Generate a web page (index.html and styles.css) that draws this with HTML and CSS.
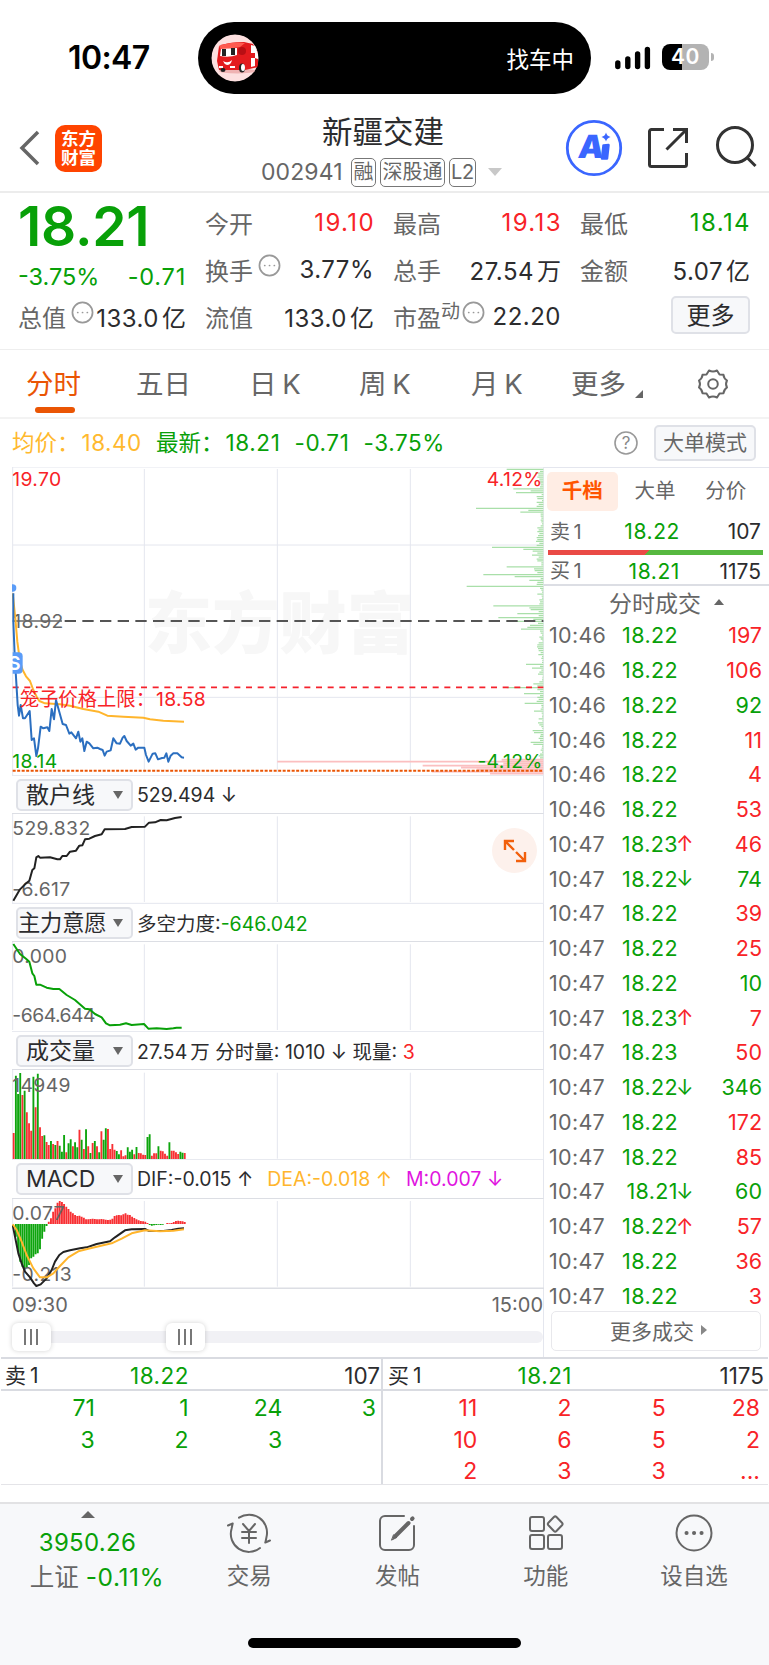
FILE: index.html
```html
<!DOCTYPE html>
<html lang="zh-CN">
  <head>
    <meta charset="UTF-8" />
    <meta name="viewport" content="width=device-width, initial-scale=1.0" />
    <title>新疆交建 002941</title>
    <link rel="stylesheet" href="styles.css">
  </head>
  <body>
    <div class="status-bar">
      <div class="clock">10:47</div>
      <div class="island">
        <svg class="van" viewBox="0 0 48 48">
          <circle cx="24" cy="24" r="23.5" fill="#fde0e0" />
          <ellipse cx="26" cy="37" rx="18" ry="2.5" fill="#efb3b3" />
          <path d="M8 12q9-4 25-4l9 2 5 9v14l-13 3-26 0-2-9z" fill="#e31b1e" />
          <path d="M8 12q12-5 26-3l-5 4-19 3z" fill="#ff5a50" />
          <path d="M40 11l4 1 3 8v5l-3-1v-5h-4zM40 24h4v8l-4 1z" fill="#fff" />
          <path d="M10 15l16-1v7q-8 3-17 1z" fill="#fff" />
          <path d="M11 15h4v7h-4zM20 14h4v7h-4z" fill="#222" />
          <circle cx="31" cy="17" r="4" fill="#b80f14" />
          <path d="M12 27q5 3 9-1-1 5-5 5-3-1-4-4z" fill="#fff" />
          <ellipse cx="12" cy="36" rx="2.5" ry="2" fill="#222" />
          <ellipse cx="31" cy="34" rx="3" ry="4.5" fill="#222" />
          <ellipse cx="32" cy="33.5" rx="2" ry="3.5" fill="#fff" />
          <path d="M8 32h4v2H8zM19 32h5v2h-5z" fill="#fff" />
        </svg>
        <span>找车中</span>
      </div>
      <svg class="signal" viewBox="0 0 36 24">
        <path d="M2.8 17v3.5M12.8 13v7.5M22.6 8v12.5M32.4 3.500v17" stroke="#000" stroke-width="5.400" stroke-linecap="round" />
      </svg>
      <div class="battery">40</div>
    </div>

    <header class="header">
      <svg class="back" viewBox="0 0 22 36"><path d="M19 2L3 18l16 16" /></svg>
      <div class="logo">东方<br>财富</div>
      <div class="stock">
        <h1>新疆交建</h1>
        <div class="stock-code">
          <span class="code">002941</span>
          <i class="badge">融</i><i class="badge">深股通</i><i class="badge l2">L2</i>
          <svg class="caret" viewBox="0 0 14 8"><path d="M0 0h14L7 8z" fill="#c8c8c8" /></svg>
        </div>
      </div>
      <svg class="ai" viewBox="0 0 58 58">
        <circle cx="29" cy="29" r="26.700" fill="#fff" stroke="#3a66ff" stroke-width="2.800" />
        <text x="17" y="39" transform="skewX(-7)">A</text>
        <path d="M38.500 26.500l5-.5-1.500 13.500h-5z" fill="#3a66ff" stroke="#3a66ff" stroke-width="2.500" stroke-linejoin="round" />
        <path d="M41 13.500q.8 3.500 4.500 4.500-3.700 1-4.500 4.500-.8-3.500-4.500-4.500 3.700-1 4.500-4.500z" fill="#3a66ff" />
      </svg>
      <svg class="share" viewBox="0 0 42 42">
        <path d="M17 2.500H4.500a2 2 0 0 0-2 2v33a2 2 0 0 0 2 2h33a2 2 0 0 0 2-2V26M26 2.500h13.500V16M39 3L19.500 22.500" />
      </svg>
      <svg class="search" viewBox="0 0 44 44"><circle cx="20" cy="19" r="17.500" /><path d="M32.500 32l8 8" /></svg>
    </header>

    <section class="quote">
      <div class="quote-price">
        <div class="price">18.21</div>
        <div class="change"><span>-3.75%</span><span>-0.71</span></div>
        <div class="cell total"><label>总值</label><svg class="dots" viewBox="0 0 24 24"><circle cx="12" cy="12" r="10.500" /><path d="M7 12h.1M12 12h.1M17 12h.1" /></svg><b>133.0<em>亿</em></b></div>
      </div>
      <div class="quote-grid">
        <div class="cell"><label>今开</label><b class="up">19.10</b></div>
        <div class="cell"><label>最高</label><b class="up">19.13</b></div>
        <div class="cell"><label>最低</label><b class="down">18.14</b></div>
        <div class="cell"><label>换手</label><svg class="dots" viewBox="0 0 24 24"><circle cx="12" cy="12" r="10.500" /><path d="M7 12h.1M12 12h.1M17 12h.1" /></svg><b>3.77%</b></div>
        <div class="cell"><label>总手</label><b>27.54<em>万</em></b></div>
        <div class="cell"><label>金额</label><b>5.07<em>亿</em></b></div>
        <div class="cell"><label>流值</label><b>133.0<em>亿</em></b></div>
        <div class="cell"><label>市盈<sup>动</sup></label><svg class="dots" viewBox="0 0 24 24"><circle cx="12" cy="12" r="10.500" /><path d="M7 12h.1M12 12h.1M17 12h.1" /></svg><b>22.20</b></div>
        <div class="cell"><button class="more-btn">更多</button></div>
      </div>
    </section>

    <nav class="tabs">
      <span class="tab active">分时</span>
      <span class="tab">五日</span>
      <span class="tab">日 K</span>
      <span class="tab">周 K</span>
      <span class="tab">月 K</span>
      <span class="tab more">更多<svg viewBox="0 0 8 8"><path d="M8 0v8H0z" fill="#666" /></svg></span>
      <svg class="gear" viewBox="0 0 32 32">
        <path d="M12 2.500q4 2 8 0l2.500 4 4 .3q.3 3.500 3.500 5.700-2 3.500 0 7-3.200 2.200-3.500 5.700l-4 .3-2.500 4q-4-2-8 0l-2.500-4-4-.3q-.3-3.500-3.500-5.700 2-3.500 0-7 3.200-2.200 3.500-5.700l4-.3z" />
        <circle cx="16" cy="16" r="4.800" />
      </svg>
    </nav>

    <div class="info">
      <span class="avg">均价：<b>18.40</b></span>
      <span class="latest">最新：<b>18.21</b><b>-0.71</b><b>-3.75%</b></span>
      <svg class="help" viewBox="0 0 24 24"><circle cx="12" cy="12" r="11" /><text x="12" y="18" text-anchor="middle">?</text></svg>
      <button class="mode-btn">大单模式</button>
    </div>

    <main class="board">
      <div class="charts">
        <!-- price / average / depth, 3 units per pixel -->
        <svg class="chart" height="309" viewBox="36 36 1596 927">
          <text class="watermark" x="434" y="578">东方财富</text>
          <path class="grid" d="M433 42V952M832 42V952M1231 42V952M38 270H1630M38 727H1630" />
          <path class="grid" d="M36 36H1632M36 962H1632M38 36V962M1631 36V962" />
          <g id="depth"></g>
          <text class="t up" x="37" y="94">19.70</text>
          <text class="t up" x="1628" y="94" text-anchor="end">4.12%</text>
          <path d="M38 498H186" stroke="#666" stroke-width="4" />
          <path d="M194 498H1630" stroke="#555" stroke-width="5.500" stroke-dasharray="34 19" />
          <text class="t gray" x="40" y="518">18.92</text>
          <path d="M38 697H1630" stroke="#f5222d" stroke-width="5.500" stroke-dasharray="18 17" />
          <circle cx="38" cy="399" r="11" fill="#5a9cf8" />
          <polyline class="line avg-line" points="38,415 46,490 52,560 60,620 68,645 78,664 90,678 100,705 110,725 118,738 135,745 180,748 210,752 250,762 295,770 322,782 370,785 430,788 450,793 490,797 552,800" />
          <polyline class="line price-line" points="40,415 40,500 44,600 50,700 53,750 57,782 62,750 69,790 75,790 89,768 95,855 102,850 109,903 114,880 122,815 130,820 142,817 148,828 155,762 162,793 168,735 188,807 198,810 208,836 214,832 228,850 235,830 241,860 247,850 253,888 260,860 268,865 280,880 292,878 300,882 308,885 314,902 320,890 332,886 340,850 350,865 360,866 368,848 373,843 380,858 392,872 400,866 407,884 415,878 433,878 438,900 446,920 458,896 466,895 474,913 486,909 493,908 499,895 505,920 512,902 520,895 532,895 545,907 552,908" />
          <path d="M38 592h18q12 0 12 12v40q0 12-12 12H38z" fill="#5a9cf8" />
          <text class="t sell" x="24" y="646">S</text>
          <text class="t up cage" x="59" y="754">笼子价格上限：</text>
          <text class="t up" x="468" y="754">18.58</text>
          <text class="t down" x="37" y="939">18.14</text>
          <text class="t down" x="1628" y="939" text-anchor="end">-4.12%</text>
          <path d="M38 947H1630" stroke="#ea5504" stroke-width="6" stroke-dasharray="9 4.500" />
        </svg>

        <div class="indicator"><button>散户线<i></i></button><span>529.494 ↓</span></div>
        <svg class="chart" height="90" viewBox="36 132 1596 270">
          <path class="grid" d="M433 139V396M832 139V396M1231 139V396M36 400H1632M38 132V400M1631 132V400" />
          <text class="t gray" x="37" y="195">529.832</text>
          <text class="t gray" x="37" y="377">-6.617</text>
          <polyline class="line black" points="40,392 60,358 75,343 88,332 97,300 103,295 109,262 115,258 120,263 150,262 172,268 180,268 187,258 200,258 210,245 228,242 238,227 247,226 255,208 268,206 285,198 305,193 314,178 375,177 395,171 435,170 447,158 465,157 482,150 500,151 525,144 545,141" />
        </svg>

        <div class="indicator wide"><button>主力意愿<i></i></button><span>多空力度:<b class="down">-646.042</b></span></div>
        <svg class="chart" height="90" viewBox="36 516 1596 270">
          <path class="grid" d="M433 523V780M832 523V780M1231 523V780M36 785H1632M38 516V780M1631 516V786" />
          <text class="t gray" x="37" y="579">0.000</text>
          <text class="t gray tight" x="37" y="757">-664.644</text>
          <polyline class="line green" points="40,522 60,552 78,566 88,575 97,610 103,618 109,644 120,644 140,653 160,657 178,657 200,675 225,690 255,716 268,718 285,732 305,742 318,760 330,766 360,764 378,760 395,765 432,762 445,776 470,775 500,777 520,775 530,773 545,773" />
        </svg>

        <div class="indicator"><button>成交量<i></i></button><span>27.54<em>万</em> 分时量: 1010 ↓ 现量: <b class="up">3</b></span></div>
        <svg class="chart" height="90" viewBox="36 90 1596 270">
          <path class="grid" d="M433 98V356M832 98V356M1231 98V356M36 359H1632M38 90V360M1631 90V360" />
          <g id="volume"></g>
          <text class="t gray" x="37" y="155">14949</text>
        </svg>

        <div class="indicator macd-row"><button>MACD<i></i></button><span>DIF:-0.015 ↑</span><span class="dea">DEA:-0.018 ↑</span><span class="m">M:0.007 ↓</span></div>
        <svg class="chart" height="90" viewBox="36 477 1596 270">
          <path class="grid" d="M433 483V740M832 483V740M1231 483V740M38 474V740M1631 474V747" />
          <path d="M36 745H1632" stroke="#dcdee4" stroke-width="5" />
          <g id="macd"></g>
          <text class="t gray" x="37" y="540">0.077</text>
          <text class="t gray" x="37" y="722">-0.213</text>
          <polyline class="line black" points="38,555 45,590 55,640 65,670 75,695 90,712 102,730 109,738 122,733 140,715 155,690 165,665 178,645 190,636 210,631 240,625 260,622 290,612 330,604 345,592 375,571 395,568 435,567 445,572 490,573 515,570 535,566 552,565" />
          <polyline class="line avg-line" points="38,553 50,570 65,605 80,645 100,685 120,712 140,712 160,700 180,678 205,652 235,634 265,626 300,618 335,610 365,596 395,580 435,571 480,574 520,572 552,568" />
        </svg>

        <div class="axis"><span>09:30</span><span>15:00</span></div>
        <div class="slider">
          <div class="track"></div>
          <div class="handle"></div>
          <div class="handle end"></div>
        </div>
        <div class="expand"><svg viewBox="0 0 24 24"><path d="M2 11V2h9M2 2l9 9M22 13v9h-9M22 22l-9-9" /></svg></div>
      </div>

      <aside class="side">
        <div class="side-tabs"><span class="active">千档</span><span>大单</span><span>分价</span></div>
        <div class="level"><span>卖 1</span><b class="down">18.22</b><b>107</b></div>
        <div class="ratio"></div>
        <div class="level buy"><span>买 1</span><b class="down">18.21</b><b>1175</b></div>
        <div class="side-title">分时成交<i></i></div>
        <div class="trades" id="trades"></div>
        <button class="more-trades">更多成交<i></i></button>
      </aside>
    </main>

    <section class="orders">
      <div class="order-side">
        <div class="order-head"><span>卖 1</span><b class="down">18.22</b><b>107</b></div>
        <div class="order-grid down">
          <span>71</span><span>1</span><span>24</span><span>3</span>
          <span>3</span><span>2</span><span>3</span>
        </div>
      </div>
      <div class="order-side">
        <div class="order-head"><span>买 1</span><b class="down">18.21</b><b>1175</b></div>
        <div class="order-grid up">
          <span>11</span><span>2</span><span>5</span><span>28</span>
          <span>10</span><span>6</span><span>5</span><span>2</span>
          <span>2</span><span>3</span><span>3</span><span>...</span>
        </div>
      </div>
    </section>

    <footer class="bottom">
      <div class="bottom-nav">
        <div class="index">
          <i></i>
          <b class="down">3950.26</b>
          <span>上证 <b class="down">-0.11%</b></span>
        </div>
        <div class="nav-item">
          <svg viewBox="0 0 44 40">
            <path d="M12 4.700A18 18 0 0 1 39.500 24l-1 5M38.300 29.500l4.700-2M33 35A18 18 0 0 1 4.500 16l1.200-5.500M5.700 10.500L1 12.500" />
            <path d="M16 11l6 7 6-7M15 19h14M15 25h14M22 18v12" />
          </svg>
          交易
        </div>
        <div class="nav-item">
          <svg viewBox="0 0 44 40">
            <path d="M29 3H10a5 5 0 0 0-5 5v24a5 5 0 0 0 5 5h24a5 5 0 0 0 5-5V13" />
            <path d="M33.500 10L20.500 23" stroke-width="4" /><path d="M18.800 22l3 2.500-5 2.500z" fill="#666" stroke-width="1" /><path d="M37 6l.6-.6" stroke-width="4" />
          </svg>
          发帖
        </div>
        <div class="nav-item">
          <svg viewBox="0 0 44 40">
            <rect x="6" y="4" width="14" height="14" rx="2" /><rect x="6" y="22" width="14" height="14" rx="2" /><rect x="24" y="22" width="14" height="14" rx="2" />
            <path d="M29.900 4q1.300-1.200 2.600 0l5.500 5.700q1.200 1.300 0 2.600L32.500 18q-1.300 1.200-2.600 0l-5.500-5.700q-1.200-1.300 0-2.600z" />
          </svg>
          功能
        </div>
        <div class="nav-item">
          <svg viewBox="0 0 44 40"><circle cx="22" cy="20" r="17.500" /><path d="M14.500 20h.1M22 20h.1M29.500 20h.1" stroke-width="4" /></svg>
          设自选
        </div>
      </div>
      <div class="home-bar"></div>
    </footer>

    <script>
      const NS = "http://www.w3.org/2000/svg";
      const RED = "#f82f33";
      const GREEN = "#0da50d";

      function addPath(id, d, color, width) {
        const path = document.createElementNS(NS, "path");
        path.setAttribute("d", d);
        path.setAttribute("stroke", color);
        path.setAttribute("stroke-width", width);
        document.getElementById(id).appendChild(path);
      }

      // order depth, one value per price tick from the top
      const depth = [110, 10, 25, 15, 18, 12, 10, 14, 8, 10, 90, 38, 82, 5, 20, 18, 4, 20, 14, 20, 202, 45, 69, 8, 8, 6, 8, 6, 4, 8, 18, 14, 18, 12, 16, 20, 18, 22, 12, 20, 154, 60, 32, 18, 34, 14, 20, 18, 6, 6, 110, 28, 26, 18, 180, 86, 8, 42, 18, 20, 230, 10, 6, 4, 18, 5, 4, 12, 10, 12, 150, 42, 38, 14, 78, 14, 135, 30, 110, 16, 40, 48, 67, 10, 8, 4, 12, 8, 3, 14, 18, 19, 16, 14, 8, 15, 4, 6, 3, 4, 52, 10, 34, 6, 12, 16, 2, 3, 4, 12, 30, 18, 110, 18, 10, 58, 10, 18, 14, 20, 56, 6, 5, 8, 28, 5, 3, 4, 14, 3, 16, 12, 6, 3, 32, 28, 8, 10, 14, 10, 38, 30, 4, 5, 8, 4, 10, 14, 10];
      addPath("depth", depth.map((len, i) => `M1630 ${(43 + i * 5.85).toFixed(1)}h${-len}`).join(""), "#a9dfa9", 3.8);
      const bids = [125, 798, 120, 362, 247, 200, 335, 160];
      addPath("depth", bids.map((len, i) => `M1630 ${914 + i * 6}h${-len}`).join(""), "#fbbfc0", 5);

      // minute volume, negative = falling minute
      const volume = [78, -250, -195, -258, 192, -205, 140, 107, 85, -247, 155, -256, 95, 69, -71, 51, 42, -54, 45, -42, 54, -40, -22, -72, 20, -47, -59, 38, -50, -35, 88, -58, 30, -89, 38, -18, 48, -54, 38, -20, 83, -58, -92, 90, 30, 45, 28, -24, -14, 26, 8, 11, -35, -22, -28, 14, -36, 18, 17, 13, 12, -66, -74, 10, 17, 17, -38, 25, 23, 16, 10, -50, 25, 25, 20, 15, -22, -19, 18];
      const macd = [0, -38, -83, -113, -128, -134, -131, -123, -103, -98, -91, -88, -76, -44, -23, -6, 7, 17, 37, 47, 64, 69, 66, 60, 52, 45, 37, 32, 27, 24, 25, 22, 19, 14, 14, 15, 16, 15, 14, 14, 15, 14, 13, 12, 13, 16, 24, 26, 27, 26, 29, 32, 28, 27, 22, 18, 14, 11, 9, 8, 7, 3, -3, -5, -4, -3, -2, -3, -2, 0, 3, 2, 3, 6, 9, 10, 9, 8, 6];

      function drawBars(id, data, base, twoSided) {
        let up = "", down = "";
        data.forEach((v, i) => {
          const x = (41 + i * 6.58).toFixed(1);
          const d = `M${x} ${base}v${twoSided ? -v : -Math.abs(v)}`;
          if (v > 0) up += d; else down += d;
        });
        addPath(id, up, RED, 5.6);
        addPath(id, down, GREEN, 5.6);
      }
      drawBars("volume", volume, 357, false);
      drawBars("macd", macd, 552, true);

      const trades = [
        ["10:46", "18.22", "", 197, "up"], ["10:46", "18.22", "", 106, "up"],
        ["10:46", "18.22", "", 92, "down"], ["10:46", "18.22", "", 11, "up"],
        ["10:46", "18.22", "", 4, "up"], ["10:46", "18.22", "", 53, "up"],
        ["10:47", "18.23", "↑", 46, "up"], ["10:47", "18.22", "↓", 74, "down"],
        ["10:47", "18.22", "", 39, "up"], ["10:47", "18.22", "", 25, "up"],
        ["10:47", "18.22", "", 10, "down"], ["10:47", "18.23", "↑", 7, "up"],
        ["10:47", "18.23", "", 50, "up"], ["10:47", "18.22", "↓", 346, "down"],
        ["10:47", "18.22", "", 172, "up"], ["10:47", "18.22", "", 85, "up"],
        ["10:47", "18.21", "↓", 60, "down"], ["10:47", "18.22", "↑", 57, "up"],
        ["10:47", "18.22", "", 36, "up"], ["10:47", "18.22", "", 3, "up"]
      ];
      document.getElementById("trades").innerHTML = trades.map(([time, price, arrow, qty, side]) =>
        `<div class="trade"><span>${time}</span><b class="down">${price}</b><i class="${arrow === "↑" ? "up" : "down"}">${arrow}</i><b class="${side}">${qty}</b></div>`
      ).join("");
    </script>
  </body>
</html>
```

FILE: styles.css
```css
* {
  padding: 0;
  margin: 0;
  box-sizing: border-box;
}
body {
  width: 769px;
  height: 1665px;
  overflow: hidden;
  background: #fff;
  color: #2c2c2e;
  font-family: Inter, "Noto Sans CJK SC", sans-serif;
  display: flex;
  flex-direction: column;
}
b, i, em {
  font-weight: 400;
  font-style: normal;
}
button {
  font: inherit;
  color: inherit;
  background: #f7f8fa;
  border: 2px solid #dfe1e7;
  border-radius: 5px;
}
svg {
  display: block;
  flex: none;
  fill: none;
}
.up { color: #f82327; fill: #f82327; }
.down { color: #08a008; fill: #08a008; }

/* status bar */
.status-bar {
  height: 110px;
  padding-top: 22px;
  display: flex;
  align-items: flex-start;
}
.clock {
  width: 198px;
  padding-left: 68px;
  font-size: 32px;
  font-weight: 600;
  line-height: 72px;
  letter-spacing: -0.6px;
  color: #000;
}
.island {
  width: 393px;
  height: 72px;
  padding: 0 17px 0 13px;
  border-radius: 36px;
  background: #000;
  color: #fff;
  font-size: 22.5px;
  display: flex;
  align-items: center;
  justify-content: space-between;
}
.van {
  width: 48px;
  height: 48px;
  border-radius: 50%;
}
.signal {
  width: 36px;
  height: 24px;
  margin: 24px 0 0 24px;
}
.battery {
  width: 47px;
  height: 26px;
  margin: 22px 0 0 11px;
  border-radius: 8px;
  background: linear-gradient(to right, #000 42%, #b3b3b3 42%);
  color: #fff;
  font-size: 21px;
  font-weight: 600;
  line-height: 26px;
  letter-spacing: 0.5px;
  text-align: center;
  position: relative;
}
.battery::after {
  content: "";
  position: absolute;
  right: -5px;
  top: 9px;
  width: 3px;
  height: 8px;
  border-radius: 0 4px 4px 0;
  background: #b3b3b3;
}

/* header */
.header {
  height: 83px;
  padding-left: 19px;
  border-bottom: 2px solid #ececec;
  display: flex;
  align-items: center;
  padding-bottom: 5px;
}
.back {
  width: 22px;
  height: 36px;
  stroke: #666;
  stroke-width: 3.5;
}
.logo {
  width: 47px;
  height: 47px;
  margin-left: 14px;
  border-radius: 10px;
  background: #ff4400;
  color: #fff;
  font-size: 17.5px;
  font-weight: 700;
  line-height: 19px;
  padding-top: 4px;
  text-align: center;
}
.stock {
  width: 463px;
  padding-left: 99px;
}
.stock h1 {
  font-size: 30.5px;
  font-weight: 400;
  line-height: 38px;
  padding: 4px 0 0 121px;
}
.stock-code {
  display: flex;
  align-items: center;
  height: 30px;
  margin-top: 6px;
  padding-left: 60px;
  font-size: 23px;
  color: #666;
}
.code {
  width: 90px;
  letter-spacing: 0.1px;
}
.badge {
  height: 29px;
  padding: 0 1.5px;
  margin-right: 4px;
  border: 1.5px solid #777;
  border-radius: 5px;
  font-size: 20px;
  line-height: 26px;
}
.badge.l2 {
  padding: 0 1px;
  letter-spacing: -0.3px;
}
.caret {
  width: 14px;
  height: 8px;
  margin-left: 8px;
}
.ai {
  width: 58px;
  height: 58px;
}
.ai text {
  font-size: 32px;
  font-weight: 900;
  fill: #3a66ff;
}
.share {
  width: 42px;
  height: 42px;
  margin-left: 24px;
  stroke: #333;
  stroke-width: 3;
}
.search {
  width: 44px;
  height: 44px;
  margin-left: 26px;
  stroke: #333;
  stroke-width: 3;
}

/* quote */
.quote {
  height: 157px;
  padding: 6px 19px 0 18px;
  border-bottom: 1px solid #eee;
  display: flex;
}
.quote-price {
  width: 169px;
  margin-right: 19px;
}
.price {
  height: 55px;
  font-size: 55px;
  font-weight: 600;
  line-height: 55px;
  letter-spacing: -0.2px;
  color: #08a008;
}
.change {
  height: 39px;
  display: flex;
  justify-content: space-between;
  font-size: 23.5px;
  line-height: 46px;
  color: #08a008;
}
.change span:last-child { letter-spacing: 0.8px; }
.quote-grid {
  flex: 1;
  display: grid;
  grid-template-columns: 169px 168px 170px;
  grid-template-rows: repeat(3, 47px);
  column-gap: 19px;
}
.cell {
  height: 47px;
  display: flex;
  align-items: center;
  font-size: 24px;
  white-space: nowrap;
}
.cell label {
  font-size: 24px;
  color: #666;
  flex: none;
}
.cell b {
  margin-left: auto;
  letter-spacing: 0.5px;
}
.cell .up, .cell .down {
  letter-spacing: 1.4px;
  margin-right: -1px;
}
.cell em { margin-left: 3px; letter-spacing: 0; }
.cell sup {
  font-size: 19px;
  line-height: 0;
}
.dots {
  width: 23px;
  height: 23px;
  margin: 0 -2px 9px 5px;
  stroke: #999;
  stroke-width: 1.8;
  stroke-linecap: round;
}
.cell label:has(sup) + .dots { margin-left: 2px; }
.more-btn {
  width: 79px;
  height: 38px;
  margin-left: auto;
  margin-top: -4px;
  padding-top: 2px;
  font-size: 24px;
  line-height: 32px;
}

/* period tabs */
.tabs {
  height: 69px;
  padding-left: 26px;
  border-bottom: 2px solid #f3f3f3;
  display: flex;
  align-items: center;
  font-size: 27.5px;
  color: #666;
  white-space: nowrap;
}
.tab {
  flex: none;
  width: 110px;
  line-height: 68px;
  word-spacing: -2px;
}
.tab.active {
  color: #ea5504;
  position: relative;
}
.tab.active::after {
  content: "";
  position: absolute;
  left: 9px;
  bottom: 5px;
  width: 40px;
  height: 6px;
  border-radius: 3px;
  background: #ea5504;
}
.tab:nth-child(2) { width: 113px; }
.tab:nth-child(4) { width: 112px; }
.tab:nth-child(5) { width: 100px; }
.tab.more {
  width: 126px;
  display: flex;
}
.tab.more svg {
  width: 8px;
  height: 8px;
  margin: 40px 0 0 9px;
}
.gear {
  width: 32px;
  height: 32px;
  stroke: #666;
  stroke-width: 2;
  stroke-linejoin: round;
}

/* info row */
.info {
  height: 48px;
  padding: 0 13px 0 12px;
  display: flex;
  align-items: center;
  font-size: 22.5px;
  white-space: nowrap;
}
.info span { padding-bottom: 4px; }
.avg { color: #ffb92e; width: 144px; }
.avg b { margin-left: 2px; letter-spacing: 0.5px; }
.latest { color: #08a008; flex: 1; }
.latest b { margin-right: 14px; letter-spacing: 0.6px; }
.latest b:first-of-type { margin-left: 2px; }
.help {
  width: 24px;
  height: 24px;
  margin-right: 16px;
  stroke: #999;
  stroke-width: 1.6;
}
.help text {
  font-size: 17px;
  fill: #888;
  stroke: none;
}
.mode-btn {
  width: 102px;
  height: 36px;
  font-size: 21px;
  line-height: 28px;
  color: #666;
}

/* charts */
.board {
  height: 890px;
  display: flex;
}
.charts {
  width: 532px;
  margin-left: 12px;
  position: relative;
}
.chart { width: 532px; }
.grid {
  stroke: #e4e6ee;
  stroke-width: 3;
}
.t {
  font-size: 58px;
  letter-spacing: 1px;
}
.tight { letter-spacing: -1.5px; }
.gray { fill: #666; }
.cage { letter-spacing: 0; }
.sell {
  fill: #fff;
  font-weight: 600;
}
.watermark {
  font-size: 202px;
  font-weight: 900;
  fill: #f7f7f7;
}
.line {
  stroke-width: 6;
  stroke-linejoin: round;
}
.price-line { stroke: #2b6fc0; }
.avg-line { stroke: #ffb52c; }
.black { stroke: #222; }
.green { stroke: #08a008; }
.indicator {
  height: 38px;
  padding-left: 4px;
  border-bottom: 1px solid #dcdee4;
  border-right: 1px solid #e4e6ee;
  display: flex;
  align-items: center;
  font-size: 19.5px;
  white-space: nowrap;
}
.indicator button {
  width: 117px;
  height: 32px;
  padding: 0 8px 0 8px;
  margin-right: 4px;
  display: flex;
  align-items: center;
  justify-content: space-between;
  font-size: 23px;
  line-height: 26px;
}
.indicator button i {
  border: 5px solid transparent;
  border-top: 8px solid #666;
  border-bottom: 0;
}
.indicator em { margin-left: 3px; }
.indicator.wide button {
  padding-left: 0;
  font-size: 22.3px;
  letter-spacing: -0.2px;
}
.macd-row { height: 39px; }
.macd-row button { padding-left: 8px; }
.dea { color: #ffb52c; margin-left: 14px; }
.m { color: #e014e0; margin-left: 14px; }
.axis {
  height: 28px;
  display: flex;
  justify-content: space-between;
  font-size: 20px;
  line-height: 32px;
  color: #666;
  border-right: 1px solid #e4e6ee;
}
.slider {
  height: 40px;
  padding-top: 14px;
  position: relative;
  border-right: 1px solid #e4e6ee;
}
.track {
  height: 12px;
  border-radius: 6px;
  background: #f1f1f5;
}
.handle {
  position: absolute;
  left: 0;
  top: 6px;
  width: 39px;
  height: 28px;
  border-radius: 6px;
  background: linear-gradient(#777, #777) 12px 6px / 2px 16px no-repeat,
    linear-gradient(#777, #777) 18px 6px / 2px 16px no-repeat,
    linear-gradient(#777, #777) 24px 6px / 2px 16px no-repeat, #fff;
  box-shadow: 0 0 5px rgba(0,0,0,0.18);
}
.handle.end { left: 154px; }
.expand {
  position: absolute;
  left: 480px;
  top: 361px;
  width: 45px;
  height: 45px;
  border-radius: 50%;
  background: #fdf1ec;
  display: flex;
  align-items: center;
  justify-content: center;
}
.expand svg {
  width: 24px;
  height: 24px;
  stroke: #f2600c;
  stroke-width: 2.4;
}

/* right panel */
.side {
  width: 225px;
  border-top: 1px solid #e4e6ee;
}
.side-tabs {
  height: 46px;
  padding: 4px 8px 0 3px;
  display: flex;
  font-size: 20.5px;
  line-height: 38px;
  color: #666;
  text-align: center;
}
.side-tabs span { width: 72px; }
.side-tabs .active {
  height: 39px;
  border-radius: 5px;
  background: #ffede4;
  color: #ff5500;
  font-weight: 700;
}
.side-tabs span:nth-child(2) { margin-left: 2px; }
.level {
  height: 36px;
  padding: 0 8px 0 6px;
  display: flex;
  font-size: 21px;
  line-height: 36px;
}
.level span { width: 38px; font-size: 20px; color: #666; word-spacing: -2px; }
.level b:nth-child(2) { width: 92px; text-align: right; letter-spacing: 0.6px; }
.level b:last-child { margin-left: auto; }
.ratio {
  height: 5px;
  margin: 0 6px 0 4px;
  background: linear-gradient(135deg, #ea4a46 46%, #56b83f 46%);
}
.level.buy {
  height: 31px;
  line-height: 33px;
  border-bottom: 2px solid #dcdee4;
}
.side-title {
  height: 32px;
  padding-left: 65px;
  display: flex;
  align-items: center;
  font-size: 23px;
  color: #666;
}
.side-title i {
  margin-left: 13px;
  border: 5px solid transparent;
  border-bottom: 6px solid #666;
  border-top: 0;
}
.trades {
  height: 693px;
  display: grid;
  grid-template-rows: repeat(20, 34.75px);
}
.trade {
  padding: 0 7px 0 5px;
  display: flex;
  align-items: center;
  font-size: 21.5px;
}
.trade span { width: 66px; color: #666; letter-spacing: 0.3px; }
.trade b:nth-child(2) { width: 63px; text-align: right; letter-spacing: 0.4px; }
.trade i { width: 18px; font-size: 21px; margin-left: -2px; }
.trade b:last-child { margin-left: auto; }
.more-trades {
  width: 210px;
  height: 40px;
  margin-left: 7px;
  padding: 0 0 3px 5px;
  background: #fff;
  border: 1.5px solid #e8e8ec;
  display: flex;
  align-items: center;
  justify-content: center;
  font-size: 21px;
  color: #666;
}
.more-trades i {
  margin-left: 7px;
  border: 5px solid transparent;
  border-left: 6px solid #888;
  border-right: 0;
}

/* order queue */
.orders {
  height: 128px;
  margin: 0 1px;
  border-top: 2px solid #d9dbe1;
  border-bottom: 1px solid #e4e4e8;
  display: flex;
}
.order-side {
  flex: 1;
  height: 125px;
}
.order-side:first-child {
  flex: none;
  width: 382px;
  border-right: 2px solid #d9dbe1;
}
.order-head {
  height: 32px;
  padding: 0 4px 0 5px;
  border-bottom: 2px solid #d9dbe1;
  display: flex;
  font-size: 22.5px;
  line-height: 33px;
}
.order-head span { width: 40px; font-size: 21px; word-spacing: -2px; }
.order-head b:nth-child(2) { width: 144px; text-align: right; letter-spacing: 0.5px; }
.order-head b:last-child { margin-left: auto; }
.order-side:first-child .order-head { padding: 0 1px 0 4px; }
.order-grid {
  padding: 1px 8px 0 0;
  display: grid;
  grid-template-columns: repeat(4, 1fr);
  grid-auto-rows: 31.6px;
  font-size: 23px;
  line-height: 32px;
  text-align: right;
}
.order-side:first-child .order-grid { padding-right: 5px; }

/* bottom bar */
.bottom {
  height: 163px;
  margin-top: 17px;
  border-top: 2px solid #e2e2e4;
  background: #f7f8fa;
}
.bottom-nav {
  height: 134px;
  display: flex;
  color: #666;
  font-size: 22.5px;
  line-height: 34px;
}
.index {
  width: 175px;
  padding-top: 7px;
  display: flex;
  flex-direction: column;
  align-items: center;
}
.index i {
  border: 7px solid transparent;
  border-bottom: 7px solid #666;
  border-top: 0;
}
.index > span { margin: 1px 0 0 19px; white-space: nowrap; font-size: 24.5px; }
.index > span b { letter-spacing: 0.6px; }
.index > b { margin-top: 8px; font-size: 24px; line-height: 33px; letter-spacing: 0.3px; }
.nav-item {
  width: 148.3px;
  padding-top: 9px;
  display: flex;
  flex-direction: column;
  align-items: center;
}
.nav-item svg {
  width: 44px;
  height: 40px;
  margin-bottom: 6px;
  stroke: #666;
  stroke-width: 2;
  stroke-linecap: round;
}
.home-bar {
  width: 273px;
  height: 10px;
  margin: 0 auto;
  border-radius: 5px;
  background: #000;
}
```
